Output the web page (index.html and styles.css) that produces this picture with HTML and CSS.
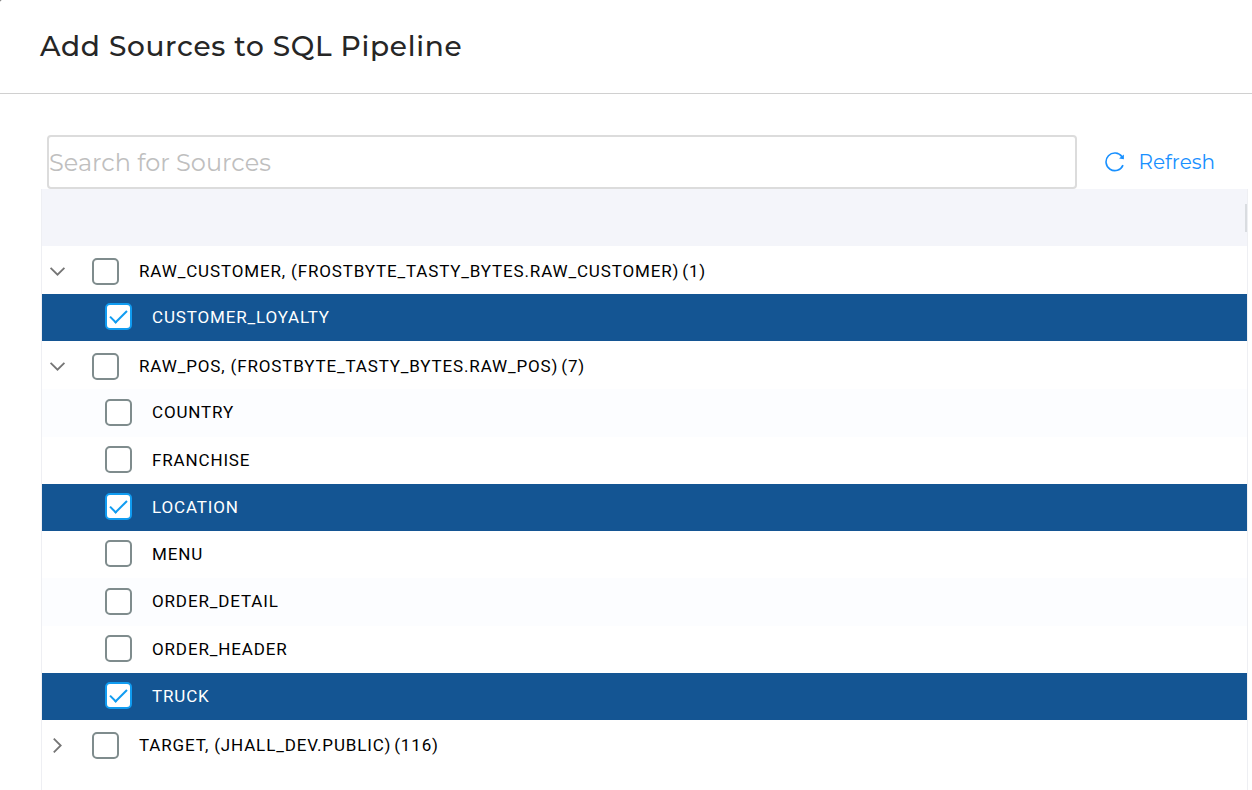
FILE: index.html
```html
<!DOCTYPE html>
<html lang="en">
<head>
<meta charset="utf-8">
<meta name="viewport" content="width=device-width, initial-scale=1">
<title>Add Sources to SQL Pipeline</title>
<link rel="stylesheet" href="styles.css">
</head>
<body>
<main class="dialog">
  <header class="dialog-header">
    <h1 class="dialog-title">Add Sources to SQL Pipeline</h1>
  </header>
  <div class="dialog-body">
    <div class="toolbar">
      <input class="search" type="search" placeholder="Search for Sources" aria-label="Search for Sources">
      <button class="refresh" type="button">
        <svg class="refresh-icon" viewBox="0 0 20 20" aria-hidden="true">
          <path d="M18 13.1A8.8 8.8 0 1 1 17 4.7" fill="none" stroke="currentColor" stroke-width="1.6"/>
          <path d="M18.9 2.4V7.2L14 6.4Z" fill="currentColor"/>
        </svg>
        <span>Refresh</span>
      </button>
    </div>
    <section class="grid">
      <div class="grid-header"><span class="column-handle"></span></div>
      <ul class="rows">
        <li>
          <div class="row group">
            <button class="toggle" type="button" aria-label="Collapse RAW_CUSTOMER" aria-expanded="true"><svg class="chevron" viewBox="0 0 16 16" aria-hidden="true"><path d="M1.5 4.5L8 11L14.5 4.5"/></svg></button>
            <label class="pick"><input class="check" type="checkbox"><span>RAW_CUSTOMER, (FROSTBYTE_TASTY_BYTES.RAW_CUSTOMER)<span class="count">(1)</span></span></label>
          </div>
          <ul class="rows">
            <li class="row child"><label class="pick"><input class="check" type="checkbox" checked><span>CUSTOMER_LOYALTY</span></label></li>
          </ul>
        </li>
        <li>
          <div class="row group">
            <button class="toggle" type="button" aria-label="Collapse RAW_POS" aria-expanded="true"><svg class="chevron" viewBox="0 0 16 16" aria-hidden="true"><path d="M1.5 4.5L8 11L14.5 4.5"/></svg></button>
            <label class="pick"><input class="check" type="checkbox"><span>RAW_POS, (FROSTBYTE_TASTY_BYTES.RAW_POS)<span class="count">(7)</span></span></label>
          </div>
          <ul class="rows">
            <li class="row child striped"><label class="pick"><input class="check" type="checkbox"><span>COUNTRY</span></label></li>
            <li class="row child"><label class="pick"><input class="check" type="checkbox"><span>FRANCHISE</span></label></li>
            <li class="row child"><label class="pick"><input class="check" type="checkbox" checked><span>LOCATION</span></label></li>
            <li class="row child"><label class="pick"><input class="check" type="checkbox"><span>MENU</span></label></li>
            <li class="row child striped"><label class="pick"><input class="check" type="checkbox"><span>ORDER_DETAIL</span></label></li>
            <li class="row child"><label class="pick"><input class="check" type="checkbox"><span>ORDER_HEADER</span></label></li>
            <li class="row child"><label class="pick"><input class="check" type="checkbox" checked><span>TRUCK</span></label></li>
          </ul>
        </li>
        <li>
          <div class="row group">
            <button class="toggle" type="button" aria-label="Expand TARGET" aria-expanded="false"><svg class="chevron" viewBox="0 0 16 16" aria-hidden="true"><path d="M4.5 1.5L11 8L4.5 14.5"/></svg></button>
            <label class="pick"><input class="check" type="checkbox"><span>TARGET, (JHALL_DEV.PUBLIC)<span class="count">(116)</span></span></label>
          </div>
        </li>
      </ul>
    </section>
  </div>
</main>
</body>
</html>
```
FILE: styles.css
```css
* { box-sizing: border-box; }

body {
  margin: 0;
  background: #555;
  font-family: Montserrat, Inter, sans-serif;
}

.dialog {
  display: flex;
  flex-direction: column;
  min-height: 100vh;
  background: #fff;
  border-top-left-radius: 2px;
}

.dialog-header {
  padding: 28px 40px 29px;
  border-bottom: 1px solid #d0d0d0;
}

.dialog-title {
  margin: 0;
  font-size: 28px;
  line-height: 36px;
  font-weight: 500;
  letter-spacing: 0.025em;
  color: #262626;
}

.dialog-body {
  flex: 1;
  display: flex;
  flex-direction: column;
  padding: 41px 4px 0 41px;
}

.toolbar {
  display: flex;
  align-items: center;
  gap: 28px;
  padding: 0 33px 0 6px;
}

.search {
  flex: 1;
  min-width: 0;
  height: 54px;
  padding: 0;
  border: 2px solid #dcdcdc;
  border-radius: 4px;
  background: #fff;
  color: #262626;
  font-family: inherit;
  font-size: 24px;
  outline: none;
}

.search::placeholder { color: #bfbfbf; opacity: 1; }

.refresh {
  display: flex;
  align-items: center;
  gap: 14px;
  padding: 0;
  border: 0;
  background: none;
  color: #1890ff;
  font-family: inherit;
  font-size: 20px;
  line-height: 28px;
}

.refresh-icon { width: 20px; height: 20px; }

.grid {
  flex: 1;
  border: solid #eeeff3;
  border-width: 0 1px;
}

.grid-header {
  display: flex;
  align-items: center;
  justify-content: flex-end;
  height: 57px;
  background: #f4f5fa;
}

.column-handle { width: 2px; height: 28px; background: #d9dce0; }

.rows { margin: 0; padding: 0; list-style: none; }

.row {
  display: flex;
  align-items: center;
  background: #fff;
  color: #000;
  font-family: Roboto, sans-serif;
  font-size: 17px;
  line-height: 24px;
  letter-spacing: 0.05em;
}

.group { height: 48px; padding: 2px 0 0 7px; gap: 26px; }
.child { height: 47px; padding: 0 0 2px 63px; }
.striped { height: 48px; background: #fcfdff; }
.row.child:has(.check:checked) { background: #145593; color: #fff; }

.count { margin-left: 3px; }

.toggle {
  display: flex;
  padding: 0;
  border: 0;
  background: none;
}

.chevron {
  width: 17px;
  height: 17px;
  fill: none;
  stroke: #757575;
  stroke-width: 1.7;
}

.pick { display: flex; align-items: center; gap: 20px; }

.check {
  appearance: none;
  display: flex;
  align-items: center;
  justify-content: center;
  width: 27px;
  height: 27px;
  margin: 0;
  border: 2px solid #7f8c8d;
  border-radius: 5px;
  background: #fff;
}

.check:checked { border-color: #109cf1; }

.check:checked::after {
  content: "";
  width: 15px;
  height: 7px;
  margin-bottom: 5px;
  border: solid #109cf1;
  border-width: 0 0 2px 2px;
  transform: rotate(-45deg);
}
```
